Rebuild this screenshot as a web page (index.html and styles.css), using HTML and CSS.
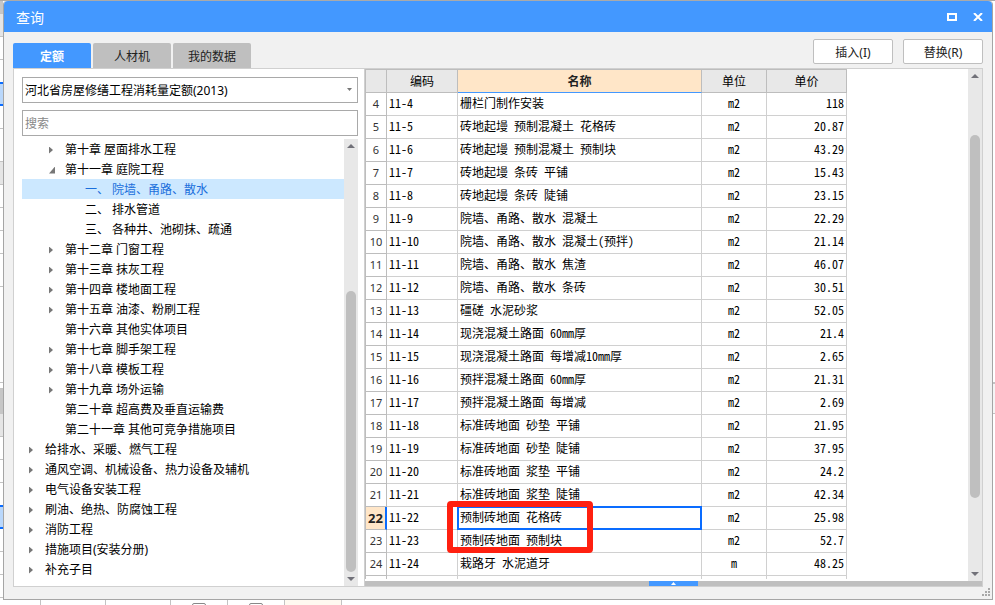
FILE: index.html
```html
<!DOCTYPE html>
<html lang="zh-CN">
<head>
  <meta charset="UTF-8">
  <meta name="viewport" content="width=device-width, initial-scale=1">
  <title>查询</title>
  <link rel="stylesheet" href="styles.css">
</head>
<body>
  <div class="desktop">
    <!-- edge of the sheet behind the dialog -->
    <div class="sheet-left">
      <div class="strip gray h12"></div>
      <div class="strip head h22"></div>
      <div class="strip h22"></div>
      <div class="strip h22 no-line"></div>
      <div class="strip picked"></div>
      <div class="strip h22"></div>
      <div class="strip h32"></div>
      <div class="strip head h22"></div>
      <div class="strip h22"></div>
      <div class="strip h22"></div>
      <div class="strip h22"></div>
      <div class="strip h32"></div>
      <div class="strip h95"></div>
      <div class="strip h5"></div>
      <div class="strip gray h25 no-line"></div>
      <div class="strip head h22"></div>
      <div class="strip h22"></div>
      <div class="strip h22"></div>
      <div class="strip h22 no-line"></div>
      <div class="strip picked"></div>
      <div class="strip h22"></div>
      <div class="strip h22"></div>
      <div class="strip h22"></div>
    </div>

    <div class="window">
      <div class="titlebar">
        <span class="title">查询</span>
        <button class="win-btn" aria-label="最大化">
          <svg width="10" height="8" viewBox="0 0 10 8"><path d="M1 1h8v6H1z" fill="none" stroke="#fff" stroke-width="2"/></svg>
        </button>
        <button class="win-btn" aria-label="关闭">
          <svg width="10" height="8" viewBox="0 0 10 8"><path d="M1 0l8 8M9 0L1 8" fill="none" stroke="#fff" stroke-width="2"/></svg>
        </button>
      </div>

      <div class="toolbar">
        <div class="tabs">
          <button class="tab active">定额</button>
          <button class="tab">人材机</button>
          <button class="tab">我的数据</button>
        </div>
        <div class="actions">
          <button class="action">插入(I)</button>
          <button class="action">替换(R)</button>
        </div>
      </div>

      <div class="content">
        <div class="side">
          <div class="select-box">
            <select class="field" aria-label="定额库">
              <option>河北省房屋修缮工程消耗量定额(2013)</option>
            </select>
            <svg class="caret" width="5" height="3" viewBox="0 0 5 3"><path d="M0 0h5L2.500 3z" fill="#777"/></svg>
          </div>
          <input class="field search" type="text" placeholder="搜索" aria-label="搜索">

          <div class="tree-wrap">
            <ul class="tree">
              <li class="lv1 closed">第十章 屋面排水工程</li>
              <li class="lv1 open">第十一章 庭院工程</li>
              <li class="lv2 selected">一、 院墙、甬路、散水</li>
              <li class="lv2">二、 排水管道</li>
              <li class="lv2">三、 各种井、池砌抹、疏通</li>
              <li class="lv1 closed">第十二章 门窗工程</li>
              <li class="lv1 closed">第十三章 抹灰工程</li>
              <li class="lv1 closed">第十四章 楼地面工程</li>
              <li class="lv1 closed">第十五章 油漆、粉刷工程</li>
              <li class="lv1">第十六章 其他实体项目</li>
              <li class="lv1 closed">第十七章 脚手架工程</li>
              <li class="lv1 closed">第十八章 模板工程</li>
              <li class="lv1 closed">第十九章 场外运输</li>
              <li class="lv1">第二十章 超高费及垂直运输费</li>
              <li class="lv1">第二十一章 其他可竞争措施项目</li>
              <li class="closed">给排水、采暖、燃气工程</li>
              <li class="closed">通风空调、机械设备、热力设备及辅机</li>
              <li class="closed">电气设备安装工程</li>
              <li class="closed">刷油、绝热、防腐蚀工程</li>
              <li class="closed">消防工程</li>
              <li class="closed">措施项目(安装分册)</li>
              <li class="closed">补充子目</li>
            </ul>
            <div class="scrollbar tree-scroll">
              <span class="arrow up"></span>
              <div class="track"><div class="thumb"></div></div>
              <span class="arrow down"></span>
            </div>
          </div>
        </div>

        <div class="main">
          <div class="grid-wrap">
            <div class="grid-clip">
              <table class="grid">
                <colgroup>
                  <col class="c-num"><col class="c-code"><col class="c-name"><col class="c-unit"><col class="c-price">
                </colgroup>
                <thead>
                  <tr><th></th><th>编码</th><th class="current">名称</th><th>单位</th><th>单价</th></tr>
                </thead>
                <tbody>
                  <tr><th>4</th><td>11-4</td><td>栅栏门制作安装</td><td>m2</td><td>118</td></tr>
                  <tr><th>5</th><td>11-5</td><td>砖地起墁 预制混凝土 花格砖</td><td>m2</td><td>20.87</td></tr>
                  <tr><th>6</th><td>11-6</td><td>砖地起墁 预制混凝土 预制块</td><td>m2</td><td>43.29</td></tr>
                  <tr><th>7</th><td>11-7</td><td>砖地起墁 条砖 平铺</td><td>m2</td><td>15.43</td></tr>
                  <tr><th>8</th><td>11-8</td><td>砖地起墁 条砖 陡铺</td><td>m2</td><td>23.15</td></tr>
                  <tr><th>9</th><td>11-9</td><td>院墙、甬路、散水 混凝土</td><td>m2</td><td>22.29</td></tr>
                  <tr><th>10</th><td>11-10</td><td>院墙、甬路、散水 混凝土(预拌)</td><td>m2</td><td>21.14</td></tr>
                  <tr><th>11</th><td>11-11</td><td>院墙、甬路、散水 焦渣</td><td>m2</td><td>46.07</td></tr>
                  <tr><th>12</th><td>11-12</td><td>院墙、甬路、散水 条砖</td><td>m2</td><td>30.51</td></tr>
                  <tr><th>13</th><td>11-13</td><td>礓磋 水泥砂浆</td><td>m2</td><td>52.05</td></tr>
                  <tr><th>14</th><td>11-14</td><td>现浇混凝土路面 60mm厚</td><td>m2</td><td>21.4</td></tr>
                  <tr><th>15</th><td>11-15</td><td>现浇混凝土路面 每增减10mm厚</td><td>m2</td><td>2.65</td></tr>
                  <tr><th>16</th><td>11-16</td><td>预拌混凝土路面 60mm厚</td><td>m2</td><td>21.31</td></tr>
                  <tr><th>17</th><td>11-17</td><td>预拌混凝土路面 每增减</td><td>m2</td><td>2.69</td></tr>
                  <tr><th>18</th><td>11-18</td><td>标准砖地面 砂垫 平铺</td><td>m2</td><td>21.95</td></tr>
                  <tr><th>19</th><td>11-19</td><td>标准砖地面 砂垫 陡铺</td><td>m2</td><td>37.95</td></tr>
                  <tr><th>20</th><td>11-20</td><td>标准砖地面 浆垫 平铺</td><td>m2</td><td>24.2</td></tr>
                  <tr><th>21</th><td>11-21</td><td>标准砖地面 浆垫 陡铺</td><td>m2</td><td>42.34</td></tr>
                  <tr class="active-row"><th>22</th><td>11-22</td><td class="active-cell">预制砖地面 花格砖<span class="mark"></span></td><td>m2</td><td>25.98</td></tr>
                  <tr><th>23</th><td>11-23</td><td>预制砖地面 预制块</td><td>m2</td><td>52.7</td></tr>
                  <tr><th>24</th><td>11-24</td><td>栽路牙 水泥道牙</td><td>m</td><td>48.25</td></tr>
                  <tr><th></th><td></td><td></td><td></td><td></td></tr>
                </tbody>
              </table>
            </div>
            <div class="scrollbar grid-scroll">
              <span class="arrow up"></span>
              <div class="track"><div class="thumb"></div></div>
              <span class="arrow down"></span>
            </div>
          </div>
          <div class="splitter">
            <button class="splitter-btn" aria-label="展开">
              <svg width="5" height="3" viewBox="0 0 5 3"><path d="M0 3h5L2.500 0z" fill="#fff"/></svg>
            </button>
          </div>
        </div>
      </div>

      <div class="statusbar">
        <svg width="8" height="8" viewBox="0 0 8 8" fill="#a8a8a8"><path d="M6 0h2v2H6zM3 3h2v2H3zM6 3h2v2H6zM0 6h2v2H0zM3 6h2v2H3zM6 6h2v2H6z"/></svg>
      </div>
    </div>

    <div class="sheet-right"><div class="notch"></div></div>
  </div>

  <div class="sheet-bottom">
    <div class="cell first"></div>
    <div class="cell wide"></div>
    <div class="cell wide"></div>
    <div class="cell"><input type="checkbox" aria-label="选项一"></div>
    <div class="cell"><input type="checkbox" aria-label="选项二"></div>
    <div class="cell cream"></div>
  </div>
</body>
</html>
```
FILE: styles.css
```css
* {
  box-sizing: border-box;
}

body {
  margin: 0;
  height: 100vh;
  display: flex;
  flex-direction: column;
  overflow: hidden;
  background: #fff;
  color: #000;
  font-family: "Noto Sans", "Noto Sans CJK SC", sans-serif;
  font-size: 12px;
}

button,
input,
select {
  font: inherit;
  margin: 0;
}

.desktop {
  flex: 1;
  min-height: 0;
  display: flex;
  padding-top: 1px;
  background: linear-gradient(#aaa 1px, #fff 1px);
}

/* sheet behind the dialog */
.sheet-left {
  width: 3px;
  overflow: hidden;
}

.strip {
  box-sizing: content-box;
  border-bottom: 1px solid #c3c3c3;
}

.strip.gray { background: #c6c6c6; }
.strip.head { background: #e5e5e5; }
.strip.no-line { border-bottom: 0; }

.strip.picked {
  height: 20px;
  background: #b9d7fb;
  border-top: 2px solid #0a6cff;
  border-bottom: 2px solid #0a6cff;
}

.h5 { height: 5px; }
.h12 { height: 12px; }
.h22 { height: 22px; }
.h25 { height: 25px; }
.h32 { height: 32px; }
.h95 { height: 95px; }

.sheet-right {
  width: 2px;
  padding-top: 381px;
}

.notch {
  height: 32px;
  background: #f5f5f5;
  border-top: 2px solid #c3c3c3;
  border-bottom: 1px solid #c3c3c3;
}

.sheet-bottom {
  height: 5px;
  display: flex;
  overflow: hidden;
}

.cell {
  width: 57px;
  border-right: 1px solid #c3c3c3;
  display: flex;
  justify-content: center;
}

.cell.first { width: 41px; }
.cell.wide { width: 65px; }
.cell.cream { background: #fff9f0; }

.cell input {
  appearance: none;
  width: 14px;
  height: 14px;
  margin-top: 3px;
  border: 1px solid #888;
  border-radius: 2px;
}

/* dialog */
.window {
  flex: 1;
  min-width: 0;
  display: flex;
  flex-direction: column;
  background: #f1f1f1;
  border: 1px solid #a5a5a5;
  border-top: 0;
  border-radius: 4px 4px 0 0;
}

.titlebar {
  height: 31px;
  padding: 0 7px 0 12px;
  display: flex;
  align-items: center;
  gap: 12px;
  background: #4398ff;
  border-radius: 4px 4px 0 0;
  color: #fff;
}

.title {
  flex: 1;
  font-size: 14px;
}

.win-btn {
  padding: 0;
  width: 14px;
  height: 14px;
  border: 0;
  background: none;
  display: flex;
  align-items: center;
  justify-content: center;
}

.toolbar {
  height: 36px;
  padding: 0 9px;
  display: flex;
  align-items: flex-end;
  justify-content: space-between;
}

.tabs {
  display: flex;
  gap: 2px;
}

.tab {
  width: 78px;
  height: 25px;
  padding: 0;
  border: 0;
  border-radius: 2px 2px 0 0;
  background: #bfbfbf;
  color: #222;
}

.tab.active {
  background: #4398ff;
  color: #fff;
  font-weight: bold;
}

.actions {
  display: flex;
  gap: 10px;
  margin-bottom: 4px;
}

.action {
  width: 80px;
  height: 25px;
  padding: 0;
  background: #fff;
  border: 1px solid #bfbfbf;
  border-radius: 2px;
  color: #222;
}

.content {
  flex: 1;
  min-height: 0;
  margin: 0 9px;
  display: flex;
  background: #fff;
  border: 1px solid #d0d0d0;
}

/* left pane */
.side {
  width: 351px;
  padding: 8px 6px 0 8px;
  display: flex;
  flex-direction: column;
  border-right: 1px solid #d0d0d0;
}

.field {
  width: 100%;
  height: 26px;
  padding: 0 2px;
  border: 1px solid #a9a9a9;
  border-radius: 0;
  background: #fff;
  color: #000;
  outline: 0;
}

select.field {
  appearance: none;
}

.select-box {
  position: relative;
}

.caret {
  position: absolute;
  right: 6px;
  top: 11px;
}

.search {
  margin-top: 7px;
}

.search::placeholder {
  color: #888;
}

.tree-wrap {
  flex: 1;
  min-height: 0;
  margin-top: 3px;
  display: flex;
}

.tree {
  flex: 1;
  margin: 0;
  padding: 0;
  list-style: none;
  overflow: hidden;
}

.tree li {
  height: 20px;
  line-height: 18px;
  padding-top: 2px;
  padding-left: 7px;
  display: flex;
  align-items: center;
  white-space: nowrap;
}

.tree li::before {
  content: "";
  width: 16px;
  height: 7px;
}

.tree .lv1 { padding-left: 27px; }
.tree .lv2 { padding-left: 47px; }

.tree .closed::before {
  background: #777;
  clip-path: polygon(0 0, 4px 50%, 0 100%);
}

.tree .open::before {
  background: #777;
  clip-path: polygon(6px 0, 6px 100%, 0 100%);
}

.tree .selected {
  background: #cce8ff;
  color: #1a6fdc;
}

/* scrollbars */
.scrollbar {
  width: 14px;
  display: flex;
  flex-direction: column;
  align-items: center;
  background: #e8e8e8;
}

.arrow {
  width: 8px;
  height: 4px;
  margin: 5px 0;
  background: #717179;
}

.arrow.up { clip-path: polygon(50% 0, 100% 100%, 0 100%); }
.arrow.down { clip-path: polygon(0 0, 100% 0, 50% 100%); }

.track {
  flex: 1;
  width: 10px;
  display: flex;
  flex-direction: column;
}

.thumb {
  border-radius: 5px;
  background: #bfbfbf;
}

.tree-scroll .thumb {
  height: 67%;
  margin-top: auto;
}

.grid-scroll .track {
  padding-top: 52px;
}

.grid-scroll .thumb {
  height: 84%;
}

/* quota table */
.main {
  flex: 1;
  min-width: 0;
  display: flex;
  flex-direction: column;
}

.grid-wrap {
  flex: 1;
  min-height: 0;
  display: flex;
  justify-content: space-between;
}

.grid-clip {
  overflow: hidden;
  margin-bottom: 2px;
}

.grid {
  width: 482px;
  table-layout: fixed;
  border-collapse: separate;
  border-spacing: 0;
  border-left: 1px solid #bdbdbd;
  border-top: 1px solid #bdbdbd;
}

.c-num { width: 21px; }
.c-code { width: 71px; }
.c-name { width: 244px; }
.c-unit { width: 65px; }
.c-price { width: 80px; }

.grid th,
.grid td {
  height: 23px;
  padding: 0;
  line-height: 20px;
  border-right: 1px solid #d0d0d0;
  border-bottom: 1px solid #d0d0d0;
  white-space: nowrap;
}

.grid th {
  font-weight: normal;
  border-color: #bdbdbd;
}

.grid thead th {
  padding-top: 2px;
  background: #e8e8e8;
}

.grid thead .current {
  background: #ffe6c8;
  border-bottom-color: #4398ff;
  color: #222;
  font-weight: bold;
}

.grid tbody th {
  color: #333;
  font-size: 11px;
}

.grid td {
  padding: 0 2px 2px;
  font-family: "Noto Sans Mono CJK SC", "Noto Sans CJK SC", monospace;
  text-align: left;
}

.grid td:nth-child(4) { text-align: center; }
.grid td:nth-child(5) { text-align: right; }

.grid .active-row th {
  background: #ffe6c8;
  border-right: 2px solid #0a6cff;
  color: #222;
  font-size: 13px;
  font-weight: bold;
}

.active-cell {
  position: relative;
}

.active-cell::after {
  content: "";
  position: absolute;
  inset: -1px;
  border: 2px solid #0a6cff;
}

/* red frame drawn round the two rows */
.mark {
  position: absolute;
  z-index: 1;
  left: -11px;
  top: -6px;
  width: 146px;
  height: 52px;
  border: 6px solid #ff2010;
  border-radius: 4px;
}

.splitter {
  height: 5px;
  display: flex;
  justify-content: center;
  background: #bfbfbf;
}

.splitter-btn {
  width: 49px;
  height: 5px;
  padding: 0;
  border: 0;
  background: #4398ff;
  display: flex;
  align-items: center;
  justify-content: center;
}

.statusbar {
  height: 12px;
  padding: 1px 2px;
  display: flex;
  justify-content: flex-end;
}
```
